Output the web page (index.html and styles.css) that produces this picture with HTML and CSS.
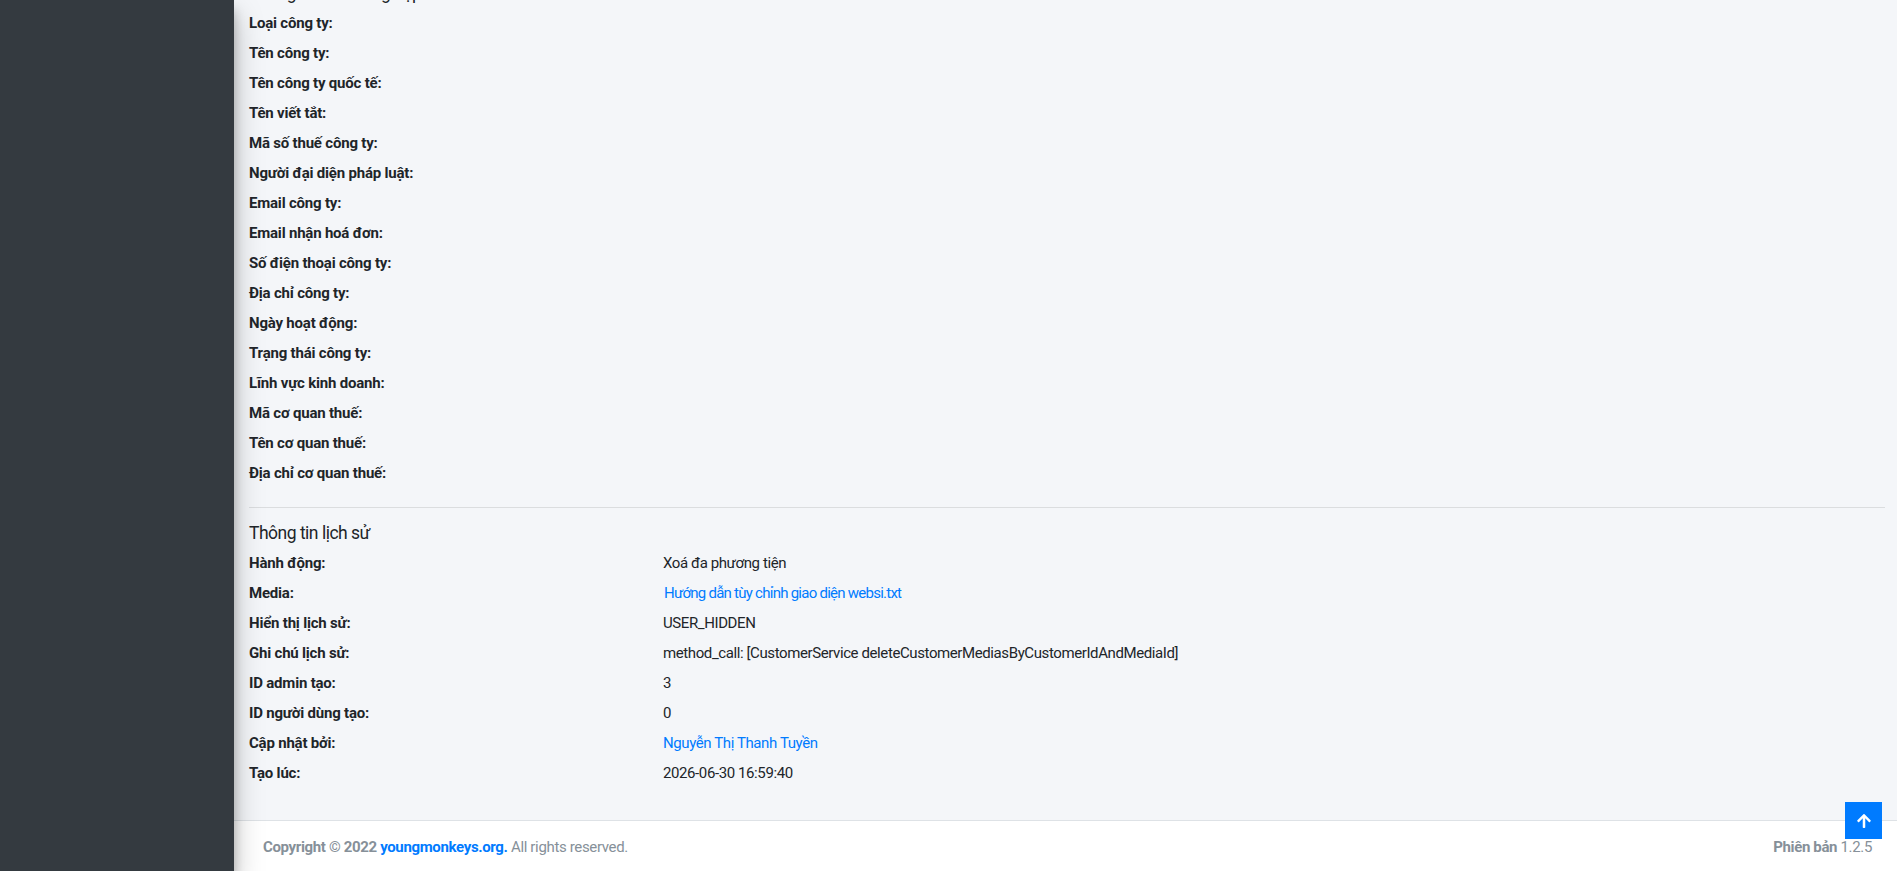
FILE: index.html
```html
<!DOCTYPE html>
<html lang="vi">
<head>
<meta charset="utf-8">
<title>Chi tiết lịch sử</title>
<link rel="stylesheet" href="styles.css">
</head>
<body>
<div class="wrapper">
  <aside class="sidebar"></aside>
  <div class="main">
    <section class="content">
      <h5 class="section-title cut">Thông tin doanh nghiệp</h5>
      <dl class="info">
        <dt>Loại công ty:</dt><dd></dd>
        <dt>Tên công ty:</dt><dd></dd>
        <dt>Tên công ty quốc tế:</dt><dd></dd>
        <dt>Tên viết tắt:</dt><dd></dd>
        <dt>Mã số thuế công ty:</dt><dd></dd>
        <dt>Người đại diện pháp luật:</dt><dd></dd>
        <dt>Email công ty:</dt><dd></dd>
        <dt>Email nhận hoá đơn:</dt><dd></dd>
        <dt>Số điện thoại công ty:</dt><dd></dd>
        <dt>Địa chỉ công ty:</dt><dd></dd>
        <dt>Ngày hoạt động:</dt><dd></dd>
        <dt>Trạng thái công ty:</dt><dd></dd>
        <dt>Lĩnh vực kinh doanh:</dt><dd></dd>
        <dt>Mã cơ quan thuế:</dt><dd></dd>
        <dt>Tên cơ quan thuế:</dt><dd></dd>
        <dt>Địa chỉ cơ quan thuế:</dt><dd></dd>
      </dl>
      <hr class="divider">
      <h5 class="section-title">Thông tin lịch sử</h5>
      <dl class="info last">
        <dt>Hành động:</dt><dd>Xoá đa phương tiện</dd>
        <dt>Media:</dt><dd><a class="link media-link" href="#">Hướng dẫn tùy chỉnh giao diện websi.txt</a></dd>
        <dt>Hiển thị lịch sử:</dt><dd>USER_HIDDEN</dd>
        <dt>Ghi chú lịch sử:</dt><dd>method_call: [CustomerService deleteCustomerMediasByCustomerIdAndMediaId]</dd>
        <dt>ID admin tạo:</dt><dd>3</dd>
        <dt>ID người dùng tạo:</dt><dd>0</dd>
        <dt>Cập nhật bởi:</dt><dd><a class="link" href="#">Nguyễn Thị Thanh Tuyền</a></dd>
        <dt>Tạo lúc:</dt><dd>2026-06-30 16:59:40</dd>
      </dl>
    </section>
    <footer class="footer">
      <div><strong>Copyright © 2022 <a class="link" href="#">youngmonkeys.org.</a></strong> All rights reserved.</div>
      <div><strong>Phiên bản</strong> 1.2.5</div>
    </footer>
  </div>
</div>
<a class="back-to-top" href="#" aria-label="Lên đầu trang">
  <svg viewBox="0 0 448 512" width="16" height="16" aria-hidden="true"><path fill="#fff" d="M34.9 289.5l-22.2-22.2c-9.4-9.4-9.4-24.6 0-33.9L207 39c9.4-9.4 24.6-9.4 33.9 0l194.3 194.3c9.4 9.4 9.4 24.6 0 33.9L413 289.4c-9.5 9.5-25 9.3-34.3-.4L264 168.6V456c0 13.3-10.7 24-24 24h-32c-13.3 0-24-10.7-24-24V168.6L69.2 289.1c-9.3 9.8-24.8 10-34.3.4z"/></svg>
</a>
</body>
</html>
```

FILE: styles.css
```css
html, body {
  margin: 0;
  padding: 0;
  height: 100%;
  overflow: hidden;
}
body {
  font-family: Roboto, "Noto Sans", "Liberation Sans", sans-serif;
  font-size: 15px;
  line-height: 1.5;
  letter-spacing: -0.35px;
  color: #212529;
  background: #f4f6f9;
}
.wrapper {
  display: flex;
  min-height: 100%;
}
.sidebar {
  flex: 0 0 234px;
  background: #343a40;
  box-shadow: 0 14px 28px rgba(0,0,0,.25), 0 10px 10px rgba(0,0,0,.22);
  position: relative;
  z-index: 2;
  min-height: 871px;
}
.main {
  flex: 1;
  display: flex;
  flex-direction: column;
  min-width: 0;
}
.content {
  padding: 0 12px 28px 15px;
}
.section-title {
  font-size: 17.5px;
  font-weight: 400;
  line-height: 22.5px;
  letter-spacing: -0.5px;
  margin: 14px 0 7.5px;
  color: #212529;
}
.section-title.cut {
  margin-top: -18px;
  margin-bottom: 7px;
}
.info {
  display: grid;
  grid-template-columns: 414px 1fr;
  margin: 0;
}
.info dt {
  font-weight: 700;
  letter-spacing: -0.2px;
  margin: 0 0 7.5px;
  height: 22.5px;
}
.info dd {
  letter-spacing: -0.4px;
  margin: 0 0 7.5px;
  height: 22.5px;
}
.divider {
  border: 0;
  border-top: 1px solid rgba(0,0,0,.1);
  margin: 15.5px 0 0;
}
.link {
  color: #007bff;
  text-decoration: none;
}
.media-link {
  padding-left: 1px;
  letter-spacing: -0.75px;
}
.footer {
  display: flex;
  justify-content: space-between;
  background: #fff;
  border-top: 1px solid #dee2e6;
  color: #869099;
  padding: 14.5px 25px 15px 29px;
}
.footer strong {
  font-weight: 700;
}
.back-to-top {
  position: fixed;
  right: 15px;
  bottom: 32px;
  width: 37px;
  height: 37px;
  background: #007bff;
  display: flex;
  align-items: center;
  justify-content: center;
  z-index: 5;
}
```
